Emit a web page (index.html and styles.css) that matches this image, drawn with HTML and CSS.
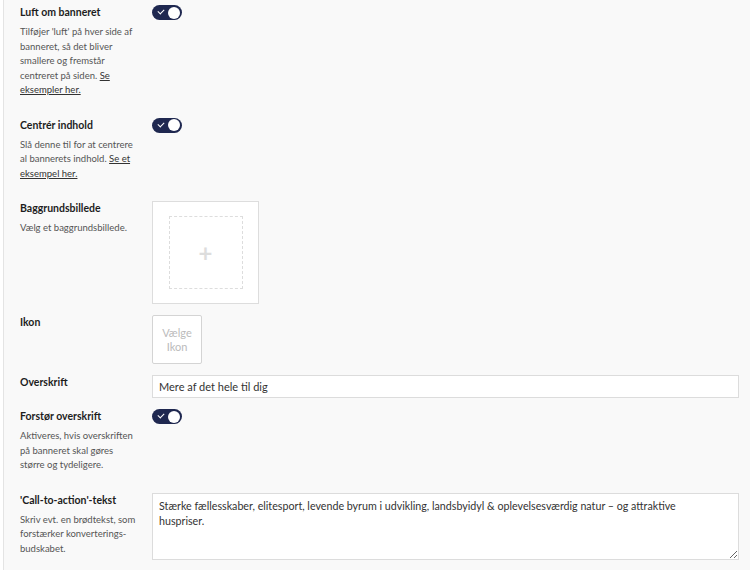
FILE: index.html
```html
<!DOCTYPE html>
<html lang="da">
<head>
    <meta charset="UTF-8">
    <title>Banner</title>
    <link rel="stylesheet" href="styles.css">
</head>
<body>
<div class="panel">

    <div class="row">
        <div class="info">
            <div class="label">Luft om banneret</div>
            <p class="desc">Tilføjer 'luft' på hver side af banneret, så det bliver smallere og fremstår centreret på siden. <a href="#">Se eksempler her.</a></p>
        </div>
        <div class="field">
            <label class="toggle"><input type="checkbox" checked><span></span></label>
        </div>
    </div>

    <div class="row">
        <div class="info">
            <div class="label">Centrér indhold</div>
            <p class="desc">Slå denne til for at centrere al bannerets indhold. <a href="#">Se et eksempel her.</a></p>
        </div>
        <div class="field">
            <label class="toggle"><input type="checkbox" checked><span></span></label>
        </div>
    </div>

    <div class="row">
        <div class="info">
            <div class="label">Baggrundsbillede</div>
            <p class="desc">Vælg et baggrundsbillede.</p>
        </div>
        <div class="field">
            <div class="image-pick">
                <div class="dashed">+</div>
            </div>
        </div>
    </div>

    <div class="row">
        <div class="info">
            <div class="label">Ikon</div>
        </div>
        <div class="field">
            <button class="icon-pick">Vælge Ikon</button>
        </div>
    </div>

    <div class="row">
        <div class="info">
            <div class="label">Overskrift</div>
        </div>
        <div class="field">
            <input class="text" type="text" value="Mere af det hele til dig">
        </div>
    </div>

    <div class="row">
        <div class="info">
            <div class="label">Forstør overskrift</div>
            <p class="desc">Aktiveres, hvis overskriften på banneret skal gøres større og tydeligere.</p>
        </div>
        <div class="field">
            <label class="toggle"><input type="checkbox" checked><span></span></label>
        </div>
    </div>

    <div class="row">
        <div class="info">
            <div class="label">'Call-to-action'-tekst</div>
            <p class="desc">Skriv evt. en brødtekst, som forstærker konverterings-budskabet.</p>
        </div>
        <div class="field">
            <textarea class="text area">Stærke fællesskaber, elitesport, levende byrum i udvikling, landsbyidyl &amp; oplevelsesværdig natur – og attraktive huspriser.</textarea>
        </div>
    </div>

</div>
</body>
</html>
```

FILE: styles.css
```css
body {
    margin: 0;
    background: #fff;
    font-family: Lato, "Open Sans", sans-serif;
    color: #222;
}
.panel {
    margin-left: 3px;
    border-left: 1px solid #e4e4e4;
    background: #f9f9f9;
    min-height: 570px;
    padding: 5px 11px 0 16px;
    display: flex;
    flex-direction: column;
    gap: 11px;
}
.row {
    display: flex;
}
.info {
    width: 117px;
    margin-right: 15px;
    flex-shrink: 0;
}
.label {
    font-size: 10.5px;
    font-weight: bold;
    line-height: 15px;
    color: #1d1d1d;
}
.desc {
    margin: 5px 0 9px;
    font-size: 9.5px;
    line-height: 14.5px;
    color: #555;
}
.desc a {
    color: #333;
}
.field {
    flex: 1;
}

/* toggle */
.toggle input {
    display: none;
}
.toggle span {
    display: block;
    position: relative;
    width: 30px;
    height: 15px;
    border-radius: 8px;
    background: #1f2850;
}
.toggle span::before {
    content: "";
    position: absolute;
    left: 6px;
    top: 4px;
    width: 5px;
    height: 3px;
    border-left: 1.5px solid #fff;
    border-bottom: 1.5px solid #fff;
    transform: rotate(-45deg);
}
.toggle span::after {
    content: "";
    position: absolute;
    right: 2px;
    top: 1.5px;
    width: 12px;
    height: 12px;
    border-radius: 50%;
    background: #fff;
}

/* image picker */
.image-pick {
    width: 105px;
    height: 101px;
    border: 1px solid #ddd;
    background: #fff;
    display: flex;
    align-items: center;
    justify-content: center;
}
.dashed {
    width: 72px;
    height: 71px;
    border: 1px dashed #ddd;
    display: flex;
    align-items: center;
    justify-content: center;
    font-size: 24px;
    font-weight: bold;
    color: #ddd;
    line-height: 1;
}
.icon-pick {
    width: 50px;
    height: 49px;
    border: 1px solid #d4d4d4;
    border-radius: 2px;
    background: #fff;
    color: #bbb;
    font-family: Lato, sans-serif;
    font-size: 11px;
    line-height: 14px;
    padding: 0 4px;
}

/* text inputs */
.text {
    display: block;
    box-sizing: border-box;
    width: 100%;
    border: 1px solid #dcdcdc;
    background: #fff;
    font-family: Lato, sans-serif;
    font-size: 11px;
    color: #333;
    outline: none;
}
input.text {
    height: 23px;
    padding: 0 6px;
}
.area {
    height: 67px;
    padding: 4px 30px 4px 6px;
    font-size: 10.7px;
    line-height: 15px;
    resize: vertical;
}
```
